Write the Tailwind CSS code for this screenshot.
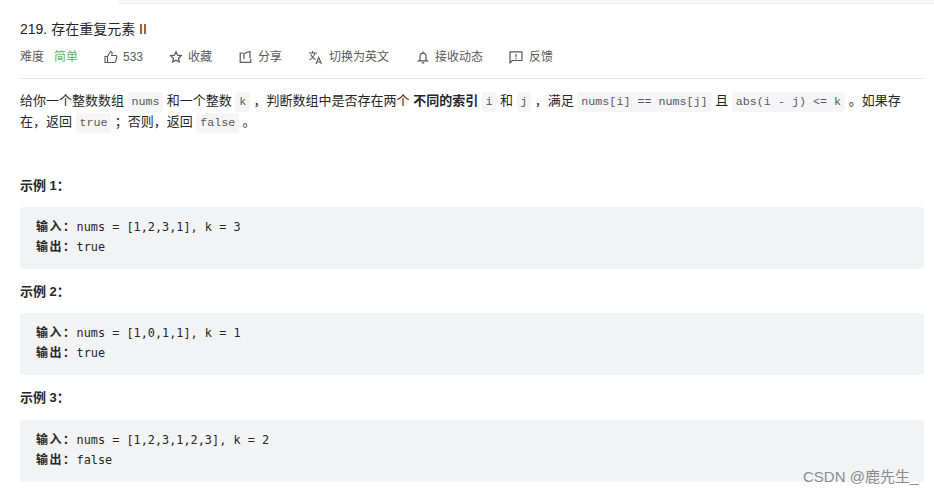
<!DOCTYPE html>
<html lang="zh-CN">
<head>
  <meta charset="UTF-8" />
  <title>219. 存在重复元素 II</title>
  <script src="https://cdn.jsdelivr.net/npm/@tailwindcss/browser@4"></script>
</head>
<body class="bg-white relative h-[494px] overflow-hidden font-['Liberation_Sans','Noto_Sans_CJK_SC',sans-serif] text-[#262626]">

  <!-- top strip -->
  <div class="ml-[119px] h-[4px] bg-[#f7f7f7] border-b border-[#f0f0f0]"></div>

  <div class="pl-[20px] pr-[10px]">
    <!-- header -->
    <h1 class="mt-[16px] text-[14px] leading-[18px] font-normal text-[#262626]">219. 存在重复元素 II</h1>

    <div class="mt-[7px] h-[24px] flex items-center text-[12px] text-[#595959]">
      <span class="w-[34px]">难度</span>
      <span class="w-[50px] text-[#5cb85c]">简单</span>
      <span class="flex items-center w-[65px]">
        <svg class="w-[14px] h-[14px] mr-[5px]" viewBox="0 0 14 14" fill="none" stroke="#595959" stroke-width="1.1"><path d="M1 6.500h2.500v6H1zM3.500 6.500 6.500 1.500c1.200 0 1.800.8 1.600 2L7.700 5.500h4c.8 0 1.300.7 1.100 1.400l-1.200 4.600c-.2.6-.6 1-1.200 1H3.500"/></svg>
        533
      </span>
      <span class="flex items-center w-[70px]">
        <svg class="w-[14px] h-[14px] mr-[5px]" viewBox="0 0 14 14" fill="none" stroke="#595959" stroke-width="1.200"><path d="M7 1.800 8.600 5.200l3.700.5-2.700 2.500.7 3.700L7 10.100l-3.300 1.800.7-3.700-2.700-2.500 3.700-.5z"/></svg>
        收藏
      </span>
      <span class="flex items-center w-[69px]">
        <svg class="w-[14px] h-[14px] mr-[5px]" viewBox="0 0 14 14" fill="none" stroke="#595959" stroke-width="1.200"><path d="M4 3H1.200v9.300h10.600V9M5 9V3.500L11 1.500v7"/></svg>
        分享
      </span>
      <span class="flex items-center w-[108px]">
        <svg class="w-[15px] h-[15px] mr-[6px]" viewBox="0 0 15 15" fill="none" stroke="#595959" stroke-width="1.100"><path d="M1 3h8M4.500 1v2M7 3C6.300 6 4 8.500 1.500 10M2.800 4.500c1 2.200 2.500 4 4.700 5.200M8 14l2.700-6.500L13.500 14M9 12h3.500"/></svg>
        切换为英文
      </span>
      <span class="flex items-center w-[93px]">
        <svg class="w-[14px] h-[14px] mr-[5px]" viewBox="0 0 14 14" fill="none" stroke="#595959" stroke-width="1.200"><path d="M4 10V6.500C4 4.500 5.200 3.200 7 3.200s3 1.300 3 3.300V10l1.200.8H2.800zM5.800 12.800h2.400M7 1.200v2"/></svg>
        接收动态
      </span>
      <span class="flex items-center">
        <svg class="w-[14px] h-[14px] mr-[6px]" viewBox="0 0 14 14" fill="none" stroke="#595959" stroke-width="1.200"><path d="M1 1.800h12v8.700H3.500L1 12.800zM7 4v3M7 8v1.200"/></svg>
        反馈
      </span>
    </div>

    <div class="mt-[9px] h-px bg-[#e8e8e8]"></div>

    <!-- description -->
    <p class="mt-[11px] text-[13px] leading-[21px] text-[#262626]">
      给你一个整数数组 <code class="font-['Liberation_Mono',monospace] leading-none text-[11.7px] text-[#595959] bg-[#f5f5f7] rounded-[3px] px-[3.75px] py-[3px]">nums</code> 和一个整数 <code class="font-['Liberation_Mono',monospace] leading-none text-[11.7px] text-[#595959] bg-[#f5f5f7] rounded-[3px] px-[3.75px] py-[3px]">k</code> ，判断数组中是否存在两个 <strong class="font-bold">不同的索引</strong> <code class="font-['Liberation_Mono',monospace] leading-none text-[11.7px] text-[#595959] bg-[#f5f5f7] rounded-[3px] px-[3.75px] py-[3px]">i</code> 和 <code class="font-['Liberation_Mono',monospace] leading-none text-[11.7px] text-[#595959] bg-[#f5f5f7] rounded-[3px] px-[3.75px] py-[3px]">j</code> ，满足 <code class="font-['Liberation_Mono',monospace] leading-none text-[11.7px] text-[#595959] bg-[#f5f5f7] rounded-[3px] px-[4px] py-[3px]">nums[i] == nums[j]</code> 且 <code class="font-['Liberation_Mono',monospace] leading-none text-[11.7px] text-[#595959] bg-[#f5f5f7] rounded-[3px] px-[4px] py-[3px]">abs(i - j) &lt;= k</code> 。如果存<br>在，返回 <code class="font-['Liberation_Mono',monospace] leading-none text-[11.7px] text-[#595959] bg-[#f5f5f7] rounded-[3px] px-[3.75px] py-[3px]">true</code> ；否则，返回 <code class="font-['Liberation_Mono',monospace] leading-none text-[11.7px] text-[#595959] bg-[#f5f5f7] rounded-[3px] px-[3.75px] py-[3px]">false</code> 。
    </p>

    <!-- examples -->
    <h3 class="mt-[45px] text-[13px] leading-[18px] font-bold">示例 1：</h3>
    <pre class="mt-[12px] h-[62px] bg-[#f2f3f5] rounded-[3px] px-[16px] pt-[10px] text-[11.85px] leading-[20px] font-['DejaVu_Sans_Mono','Noto_Sans_CJK_SC',monospace] text-[#262626]"><strong class="text-[12px] leading-none tracking-[1.5px] font-semibold">输入：</strong>nums = [1,2,3,1], k = 3
<strong class="text-[12px] leading-none tracking-[1.5px] font-semibold">输出：</strong>true</pre>

    <h3 class="mt-[14px] text-[13px] leading-[18px] font-bold">示例 2：</h3>
    <pre class="mt-[12px] h-[62px] bg-[#f2f3f5] rounded-[3px] px-[16px] pt-[10px] text-[11.85px] leading-[20px] font-['DejaVu_Sans_Mono','Noto_Sans_CJK_SC',monospace] text-[#262626]"><strong class="text-[12px] leading-none tracking-[1.5px] font-semibold">输入：</strong>nums = [1,0,1,1], k = 1
<strong class="text-[12px] leading-none tracking-[1.5px] font-semibold">输出：</strong>true</pre>

    <h3 class="mt-[14px] text-[13px] leading-[18px] font-bold">示例 3：</h3>
    <pre class="mt-[13px] h-[62px] bg-[#f2f3f5] rounded-[3px] px-[16px] pt-[10px] text-[11.85px] leading-[20px] font-['DejaVu_Sans_Mono','Noto_Sans_CJK_SC',monospace] text-[#262626]"><strong class="text-[12px] leading-none tracking-[1.5px] font-semibold">输入：</strong>nums = [1,2,3,1,2,3], k = 2
<strong class="text-[12px] leading-none tracking-[1.5px] font-semibold">输出：</strong>false</pre>
  </div>

  <!-- watermark -->
  <div class="absolute left-[803px] top-[468px] text-[15px] leading-[18px] text-[#8c8c8c] whitespace-nowrap">CSDN @鹿先生_</div>
</body>
</html>
